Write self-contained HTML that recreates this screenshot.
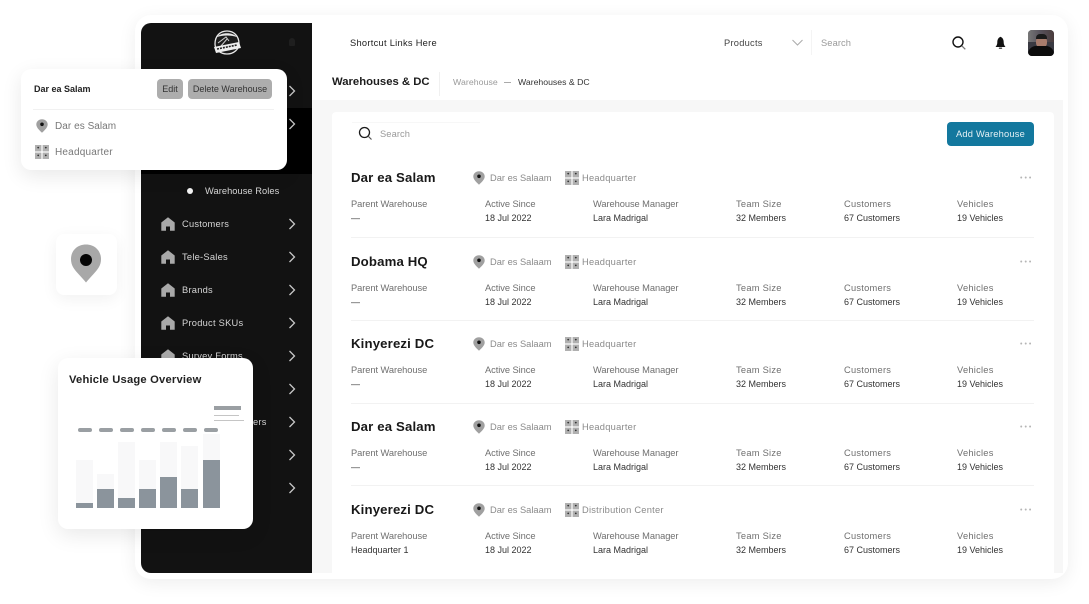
<!DOCTYPE html>
<html><head><meta charset="utf-8"><style>
html,body{margin:0;padding:0;background:#fff}
#r{position:relative;width:1089px;height:604px;overflow:hidden;background:#fff;font-family:"Liberation Sans",sans-serif;filter:blur(.3px)}
#r div,#r span,#r svg{position:absolute}
.t{white-space:nowrap;line-height:14px}
.l{font-size:9.3px;color:#6f6f6f;letter-spacing:.25px}
.m{font-size:9.3px;color:#6f6f6f;letter-spacing:-.06px}
.v{font-size:9px;color:#333;letter-spacing:0}
.h{font-size:13.2px;font-weight:bold;color:#181818;letter-spacing:.15px;line-height:16px;white-space:nowrap}
.g{font-size:9.3px;color:#8a8a8a;letter-spacing:.25px}
.c{font-size:9.3px;color:#8a8a8a;letter-spacing:0}
.o{font-size:7px;color:#b5b5b5;letter-spacing:2px}
.n{font-size:9.3px;color:#d5d5d5;letter-spacing:.25px;white-space:nowrap;line-height:14px}
.d{height:1px;background:#f2f2f2;left:351px;width:683px}
</style></head><body><div id="r">
<svg width="0" height="0"><defs>
<symbol id="pin" viewBox="0 0 12 14"><path d="M6 0.3C2.900 0.3.300 2.600.300 5.500c0 3 3.200 5.900 5.700 8.200 2.500-2.300 5.700-5.200 5.700-8.200C11.700 2.600 9.100.3 6 .3z" fill="#a0a0a0"/><circle cx="6" cy="5.300" r="1.800" fill="#111"/></symbol>
<symbol id="grid" viewBox="0 0 14 14"><rect x="0" y="0" width="6.400" height="6.400" fill="#b0b0b0"/><rect x="7.600" y="0" width="6.400" height="6.400" fill="#b0b0b0"/><rect x="0" y="7.600" width="6.400" height="6.400" fill="#b0b0b0"/><rect x="7.600" y="7.600" width="6.400" height="6.400" fill="#b0b0b0"/><circle cx="3.200" cy="2.600" r=".9" fill="#333"/><circle cx="10.800" cy="2.600" r=".9" fill="#333"/><circle cx="3.200" cy="10.400" r=".9" fill="#333"/><circle cx="10.800" cy="10.400" r=".9" fill="#333"/></symbol>
<symbol id="home" viewBox="0 0 14 14"><path d="M7 .3L.3 5.500v8.200h4.700V9.500h4v4.200h4.700V5.500z" fill="#a9a9a9"/></symbol>
<symbol id="chev" viewBox="0 0 8 12"><path d="M1.500 1l5 5-5 5" fill="none" stroke="#c8c8c8" stroke-width="1.300"/></symbol>
</defs></svg>

<div style="left:135px;top:15px;width:933px;height:564px;background:#fff;border-radius:16px;box-shadow:0 4px 18px rgba(0,0,0,.07)"></div>
<div style="left:141px;top:23px;width:171px;height:550px;background:#121212;border-radius:10px 0 0 10px"></div>
<div style="left:141px;top:108px;width:171px;height:66px;background:#000"></div>

<svg style="left:212px;top:29px" width="30" height="28" viewBox="0 0 30 28"><path d="M3 15C3 7 8 2 15 2s12 5 12 13c0 5-5 10-12 10S3 20 3 15z" fill="#1c1c1c" stroke="#e8e8e8" stroke-width="1.300"/><path d="M5 8C9 3 21 3 25 8c-6-2-14-2-20 0z" fill="#e8e8e8"/><path d="M6 14l8-6 3 4M9 17l6-7" stroke="#ccc" stroke-width="1" fill="none"/><path d="M2 18l25-5 2 6-25 5z" fill="#eee"/><path d="M5 20l20-4" stroke="#222" stroke-width="1.600" stroke-dasharray="2 1"/></svg>
<div style="left:289px;top:38px;width:6px;height:8px;background:#1f1f1f;border-radius:3px 3px 1px 1px"></div>

<div style="left:187px;top:188px;width:6px;height:6px;border-radius:50%;background:#f2f2f2"></div>
<div class="t" style="left:205px;top:184px;font-size:9.3px;color:#d6d6d6;letter-spacing:.05px">Warehouse Roles</div>

<svg style="left:161px;top:217px" width="14" height="14"><use href="#home"/></svg><div class="n" style="left:182px;top:217px">Customers</div>
<svg style="left:161px;top:250px" width="14" height="14"><use href="#home"/></svg><div class="n" style="left:182px;top:250px">Tele-Sales</div>
<svg style="left:161px;top:283px" width="14" height="14"><use href="#home"/></svg><div class="n" style="left:182px;top:283px">Brands</div>
<svg style="left:161px;top:316px" width="14" height="14"><use href="#home"/></svg><div class="n" style="left:182px;top:316px">Product SKUs</div>
<svg style="left:161px;top:349px" width="14" height="14"><use href="#home"/></svg><div class="n" style="left:182px;top:349px">Survey Forms</div>
<div class="n" style="left:253px;top:415px">ers</div>
<svg style="left:288px;top:85px" width="8" height="12"><use href="#chev"/></svg>
<svg style="left:288px;top:118px" width="8" height="12"><use href="#chev"/></svg>
<svg style="left:288px;top:218px" width="8" height="12"><use href="#chev"/></svg>
<svg style="left:288px;top:251px" width="8" height="12"><use href="#chev"/></svg>
<svg style="left:288px;top:284px" width="8" height="12"><use href="#chev"/></svg>
<svg style="left:288px;top:317px" width="8" height="12"><use href="#chev"/></svg>
<svg style="left:288px;top:350px" width="8" height="12"><use href="#chev"/></svg>
<svg style="left:288px;top:383px" width="8" height="12"><use href="#chev"/></svg>
<svg style="left:288px;top:416px" width="8" height="12"><use href="#chev"/></svg>
<svg style="left:288px;top:449px" width="8" height="12"><use href="#chev"/></svg>
<svg style="left:288px;top:482px" width="8" height="12"><use href="#chev"/></svg>

<div class="t" style="left:350px;top:36px;font-size:9.300px;color:#222;letter-spacing:.28px">Shortcut Links Here</div>
<div class="t" style="left:724px;top:36px;font-size:9.300px;color:#444;letter-spacing:.25px">Products</div>
<svg style="left:792px;top:39px" width="11" height="7"><path d="M.5 1l5 5 5-5" fill="none" stroke="#aaa" stroke-width="1"/></svg>
<div style="left:811px;top:30px;width:1px;height:25px;background:#f4f4f4"></div>
<div class="t" style="left:821px;top:36px;font-size:9.300px;color:#999;letter-spacing:.1px">Search</div>
<svg style="left:951px;top:35px" width="16" height="16"><circle cx="7" cy="7" r="5" fill="none" stroke="#111" stroke-width="1.400"/><path d="M10.800 10.800l3.500 3.500" stroke="#777" stroke-width="1.300"/></svg>
<svg style="left:994px;top:36px" width="13" height="14" viewBox="0 0 13 14"><path d="M6.500.8C4 2 3.300 4 3.300 6.500 3.300 8.500 2.500 9.800 1.500 11h10c-1-1.200-1.800-2.500-1.800-4.500C9.700 4 9 2 6.500.8z" fill="#111"/><rect x="4.800" y="11.500" width="3.400" height="1.500" rx=".7" fill="#555"/></svg>
<div style="left:1028px;top:30px;width:26px;height:26px;border-radius:4px;overflow:hidden;background:#3a3a42">
<div style="left:0;top:0;width:26px;height:12px;background:linear-gradient(90deg,#777,#56505a 50%,#4a3c3c)"></div>
<div style="left:8px;top:6px;width:11px;height:12px;border-radius:5px;background:#a87c6c"></div>
<div style="left:8px;top:4px;width:11px;height:5px;border-radius:4px 4px 0 0;background:#1a1a1a"></div>
<div style="left:0;top:16px;width:26px;height:10px;background:#0c0c0c;border-radius:8px 8px 0 0"></div>
</div>

<div class="t" style="left:332px;top:74px;font-size:11.300px;font-weight:bold;color:#1c1c1c;letter-spacing:0;line-height:16px">Warehouses &amp; DC</div>
<div style="left:439px;top:72px;width:1px;height:24px;background:#f0f0f0"></div>
<div class="t" style="left:453px;top:75px;font-size:8.700px;color:#9a9a9a;letter-spacing:.08px">Warehouse</div>
<div style="left:504px;top:81.500px;width:7px;height:1px;background:#aaa"></div>
<div class="t" style="left:518px;top:75px;font-size:8.700px;color:#333;letter-spacing:0">Warehouses &amp; DC</div>

<div style="left:312px;top:100px;width:751px;height:473px;background:#f7f7f7"></div>
<div style="left:332px;top:112px;width:722px;height:461px;background:#fff;border-radius:4px 4px 0 0"></div>

<div style="left:352px;top:122px;width:128px;height:1px;background:#f7f7f7"></div>
<svg style="left:358px;top:126px" width="15" height="15"><circle cx="6.500" cy="6.500" r="5" fill="none" stroke="#1a1a1a" stroke-width="1.300"/><path d="M10 10l3.500 3.500" stroke="#555" stroke-width="1.200"/></svg>
<div class="t" style="left:380px;top:127px;font-size:9.300px;color:#999;letter-spacing:.1px">Search</div>
<div class="t" style="left:947px;top:122px;width:87px;height:24px;line-height:24px;background:#13789e;border-radius:4px;color:#e4f0f4;font-size:9.300px;letter-spacing:.2px;text-align:center">Add Warehouse</div>

<div class="h" style="left:351px;top:170px">Dar ea Salam</div>
<svg style="left:473px;top:171px" width="12" height="14"><use href="#pin"/></svg><div class="t c" style="left:490px;top:171px">Dar es Salaam</div>
<svg style="left:565px;top:171px" width="14" height="14"><use href="#grid"/></svg><div class="t g" style="left:582px;top:171px">Headquarter</div>
<div class="t o" style="left:1020px;top:172px">•••</div>
<div class="t m" style="left:351px;top:197px">Parent Warehouse</div><div class="t v" style="left:351px;top:211px">—</div>
<div class="t m" style="left:485px;top:197px">Active Since</div><div class="t v" style="left:485px;top:211px">18 Jul 2022</div>
<div class="t m" style="left:593px;top:197px">Warehouse Manager</div><div class="t v" style="left:593px;top:211px">Lara Madrigal</div>
<div class="t l" style="left:736px;top:197px">Team Size</div><div class="t v" style="left:736px;top:211px">32 Members</div>
<div class="t l" style="left:844px;top:197px">Customers</div><div class="t v" style="left:844px;top:211px">67 Customers</div>
<div class="t l" style="left:957px;top:197px">Vehicles</div><div class="t v" style="left:957px;top:211px">19 Vehicles</div>
<div class="d" style="top:237px"></div>

<div class="h" style="left:351px;top:254px">Dobama HQ</div>
<svg style="left:473px;top:255px" width="12" height="14"><use href="#pin"/></svg><div class="t c" style="left:490px;top:255px">Dar es Salaam</div>
<svg style="left:565px;top:255px" width="14" height="14"><use href="#grid"/></svg><div class="t g" style="left:582px;top:255px">Headquarter</div>
<div class="t o" style="left:1020px;top:256px">•••</div>
<div class="t m" style="left:351px;top:281px">Parent Warehouse</div><div class="t v" style="left:351px;top:295px">—</div>
<div class="t m" style="left:485px;top:281px">Active Since</div><div class="t v" style="left:485px;top:295px">18 Jul 2022</div>
<div class="t m" style="left:593px;top:281px">Warehouse Manager</div><div class="t v" style="left:593px;top:295px">Lara Madrigal</div>
<div class="t l" style="left:736px;top:281px">Team Size</div><div class="t v" style="left:736px;top:295px">32 Members</div>
<div class="t l" style="left:844px;top:281px">Customers</div><div class="t v" style="left:844px;top:295px">67 Customers</div>
<div class="t l" style="left:957px;top:281px">Vehicles</div><div class="t v" style="left:957px;top:295px">19 Vehicles</div>
<div class="d" style="top:320px"></div>

<div class="h" style="left:351px;top:336px">Kinyerezi DC</div>
<svg style="left:473px;top:337px" width="12" height="14"><use href="#pin"/></svg><div class="t c" style="left:490px;top:337px">Dar es Salaam</div>
<svg style="left:565px;top:337px" width="14" height="14"><use href="#grid"/></svg><div class="t g" style="left:582px;top:337px">Headquarter</div>
<div class="t o" style="left:1020px;top:338px">•••</div>
<div class="t m" style="left:351px;top:363px">Parent Warehouse</div><div class="t v" style="left:351px;top:377px">—</div>
<div class="t m" style="left:485px;top:363px">Active Since</div><div class="t v" style="left:485px;top:377px">18 Jul 2022</div>
<div class="t m" style="left:593px;top:363px">Warehouse Manager</div><div class="t v" style="left:593px;top:377px">Lara Madrigal</div>
<div class="t l" style="left:736px;top:363px">Team Size</div><div class="t v" style="left:736px;top:377px">32 Members</div>
<div class="t l" style="left:844px;top:363px">Customers</div><div class="t v" style="left:844px;top:377px">67 Customers</div>
<div class="t l" style="left:957px;top:363px">Vehicles</div><div class="t v" style="left:957px;top:377px">19 Vehicles</div>
<div class="d" style="top:403px"></div>

<div class="h" style="left:351px;top:419px">Dar ea Salam</div>
<svg style="left:473px;top:420px" width="12" height="14"><use href="#pin"/></svg><div class="t c" style="left:490px;top:420px">Dar es Salaam</div>
<svg style="left:565px;top:420px" width="14" height="14"><use href="#grid"/></svg><div class="t g" style="left:582px;top:420px">Headquarter</div>
<div class="t o" style="left:1020px;top:421px">•••</div>
<div class="t m" style="left:351px;top:446px">Parent Warehouse</div><div class="t v" style="left:351px;top:460px">—</div>
<div class="t m" style="left:485px;top:446px">Active Since</div><div class="t v" style="left:485px;top:460px">18 Jul 2022</div>
<div class="t m" style="left:593px;top:446px">Warehouse Manager</div><div class="t v" style="left:593px;top:460px">Lara Madrigal</div>
<div class="t l" style="left:736px;top:446px">Team Size</div><div class="t v" style="left:736px;top:460px">32 Members</div>
<div class="t l" style="left:844px;top:446px">Customers</div><div class="t v" style="left:844px;top:460px">67 Customers</div>
<div class="t l" style="left:957px;top:446px">Vehicles</div><div class="t v" style="left:957px;top:460px">19 Vehicles</div>
<div class="d" style="top:485px"></div>

<div class="h" style="left:351px;top:502px">Kinyerezi DC</div>
<svg style="left:473px;top:503px" width="12" height="14"><use href="#pin"/></svg><div class="t c" style="left:490px;top:503px">Dar es Salaam</div>
<svg style="left:565px;top:503px" width="14" height="14"><use href="#grid"/></svg><div class="t g" style="left:582px;top:503px">Distribution Center</div>
<div class="t o" style="left:1020px;top:504px">•••</div>
<div class="t m" style="left:351px;top:529px">Parent Warehouse</div><div class="t v" style="left:351px;top:543px">Headquarter 1</div>
<div class="t m" style="left:485px;top:529px">Active Since</div><div class="t v" style="left:485px;top:543px">18 Jul 2022</div>
<div class="t m" style="left:593px;top:529px">Warehouse Manager</div><div class="t v" style="left:593px;top:543px">Lara Madrigal</div>
<div class="t l" style="left:736px;top:529px">Team Size</div><div class="t v" style="left:736px;top:543px">32 Members</div>
<div class="t l" style="left:844px;top:529px">Customers</div><div class="t v" style="left:844px;top:543px">67 Customers</div>
<div class="t l" style="left:957px;top:529px">Vehicles</div><div class="t v" style="left:957px;top:543px">19 Vehicles</div>

<div style="left:21px;top:69px;width:266px;height:101px;background:#fff;border-radius:10px;box-shadow:0 6px 20px rgba(0,0,0,.09)"></div>
<div class="t" style="left:34px;top:81.500px;font-size:9px;font-weight:bold;color:#222;letter-spacing:0">Dar ea Salam</div>
<div class="t" style="left:157px;top:79px;width:26px;height:20px;line-height:20px;background:#adadad;border-radius:4px;font-size:9px;color:#333;letter-spacing:0;text-align:center">Edit</div>
<div class="t" style="left:188px;top:79px;width:84px;height:20px;line-height:20px;background:#adadad;border-radius:4px;font-size:9px;color:#333;letter-spacing:0;text-align:center">Delete Warehouse</div>
<div style="left:33px;top:109px;width:241px;height:1px;background:#f1f1f1"></div>
<svg style="left:36px;top:119px" width="12" height="14"><use href="#pin"/></svg>
<div class="t" style="left:55px;top:120px;font-size:10px;color:#777;letter-spacing:.05px">Dar es Salam</div>
<svg style="left:35px;top:145px" width="14" height="14"><use href="#grid"/></svg>
<div class="t" style="left:55px;top:146px;font-size:10px;color:#777;letter-spacing:.2px">Headquarter</div>

<div style="left:56px;top:234px;width:61px;height:61px;background:#fff;border-radius:8px;box-shadow:0 4px 16px rgba(0,0,0,.06)"></div>
<svg style="left:70px;top:244px" width="32" height="39" viewBox="0 0 32 39"><path d="M16 .5C7 .5 1 7 1 15c0 6.500 3 10 7 14.500 3 3.300 5.500 6 8 9 2.500-3 5-5.700 8-9 4-4.500 7-8 7-14.500C31 7 25 .5 16 .5z" fill="#a8a8a8"/><circle cx="16" cy="16" r="6" fill="#050505"/></svg>

<div style="left:58px;top:358px;width:195px;height:171px;background:#fff;border-radius:10px;box-shadow:0 6px 22px rgba(0,0,0,.09)"></div>
<div class="t" style="left:69px;top:373px;font-size:11.200px;font-weight:bold;color:#222;letter-spacing:.2px">Vehicle Usage Overview</div>
<div style="left:214px;top:406px;width:27px;height:4px;background:#9a9fa3"></div>
<div style="left:214px;top:415px;width:25px;height:1px;background:#c5c5c5"></div>
<div style="left:214px;top:419.500px;width:30px;height:1px;background:#c5c5c5"></div>
<div style="left:78px;top:428px;width:14px;height:4px;border-radius:2px;background:#9a9fa3"></div>
<div style="left:99px;top:428px;width:14px;height:4px;border-radius:2px;background:#9a9fa3"></div>
<div style="left:120px;top:428px;width:14px;height:4px;border-radius:2px;background:#9a9fa3"></div>
<div style="left:141px;top:428px;width:14px;height:4px;border-radius:2px;background:#9a9fa3"></div>
<div style="left:162px;top:428px;width:14px;height:4px;border-radius:2px;background:#9a9fa3"></div>
<div style="left:183px;top:428px;width:14px;height:4px;border-radius:2px;background:#9a9fa3"></div>
<div style="left:204px;top:428px;width:14px;height:4px;border-radius:2px;background:#9a9fa3"></div>
<div style="left:76px;top:460px;width:17px;height:48px;background:#f8f8f9"></div>
<div style="left:97px;top:474px;width:17px;height:34px;background:#f8f8f9"></div>
<div style="left:118px;top:442px;width:17px;height:66px;background:#f8f8f9"></div>
<div style="left:139px;top:460px;width:17px;height:48px;background:#f8f8f9"></div>
<div style="left:160px;top:442px;width:17px;height:66px;background:#f8f8f9"></div>
<div style="left:181px;top:446px;width:17px;height:62px;background:#f8f8f9"></div>
<div style="left:203px;top:434px;width:17px;height:74px;background:#f8f8f9"></div>
<div style="left:76px;top:503px;width:17px;height:5px;background:#8b949c"></div>
<div style="left:97px;top:489px;width:17px;height:19px;background:#8b949c"></div>
<div style="left:118px;top:498px;width:17px;height:10px;background:#8b949c"></div>
<div style="left:139px;top:489px;width:17px;height:19px;background:#8b949c"></div>
<div style="left:160px;top:477px;width:17px;height:31px;background:#8b949c"></div>
<div style="left:181px;top:489px;width:17px;height:19px;background:#8b949c"></div>
<div style="left:203px;top:460px;width:17px;height:48px;background:#8b949c"></div>
</div></body></html>
